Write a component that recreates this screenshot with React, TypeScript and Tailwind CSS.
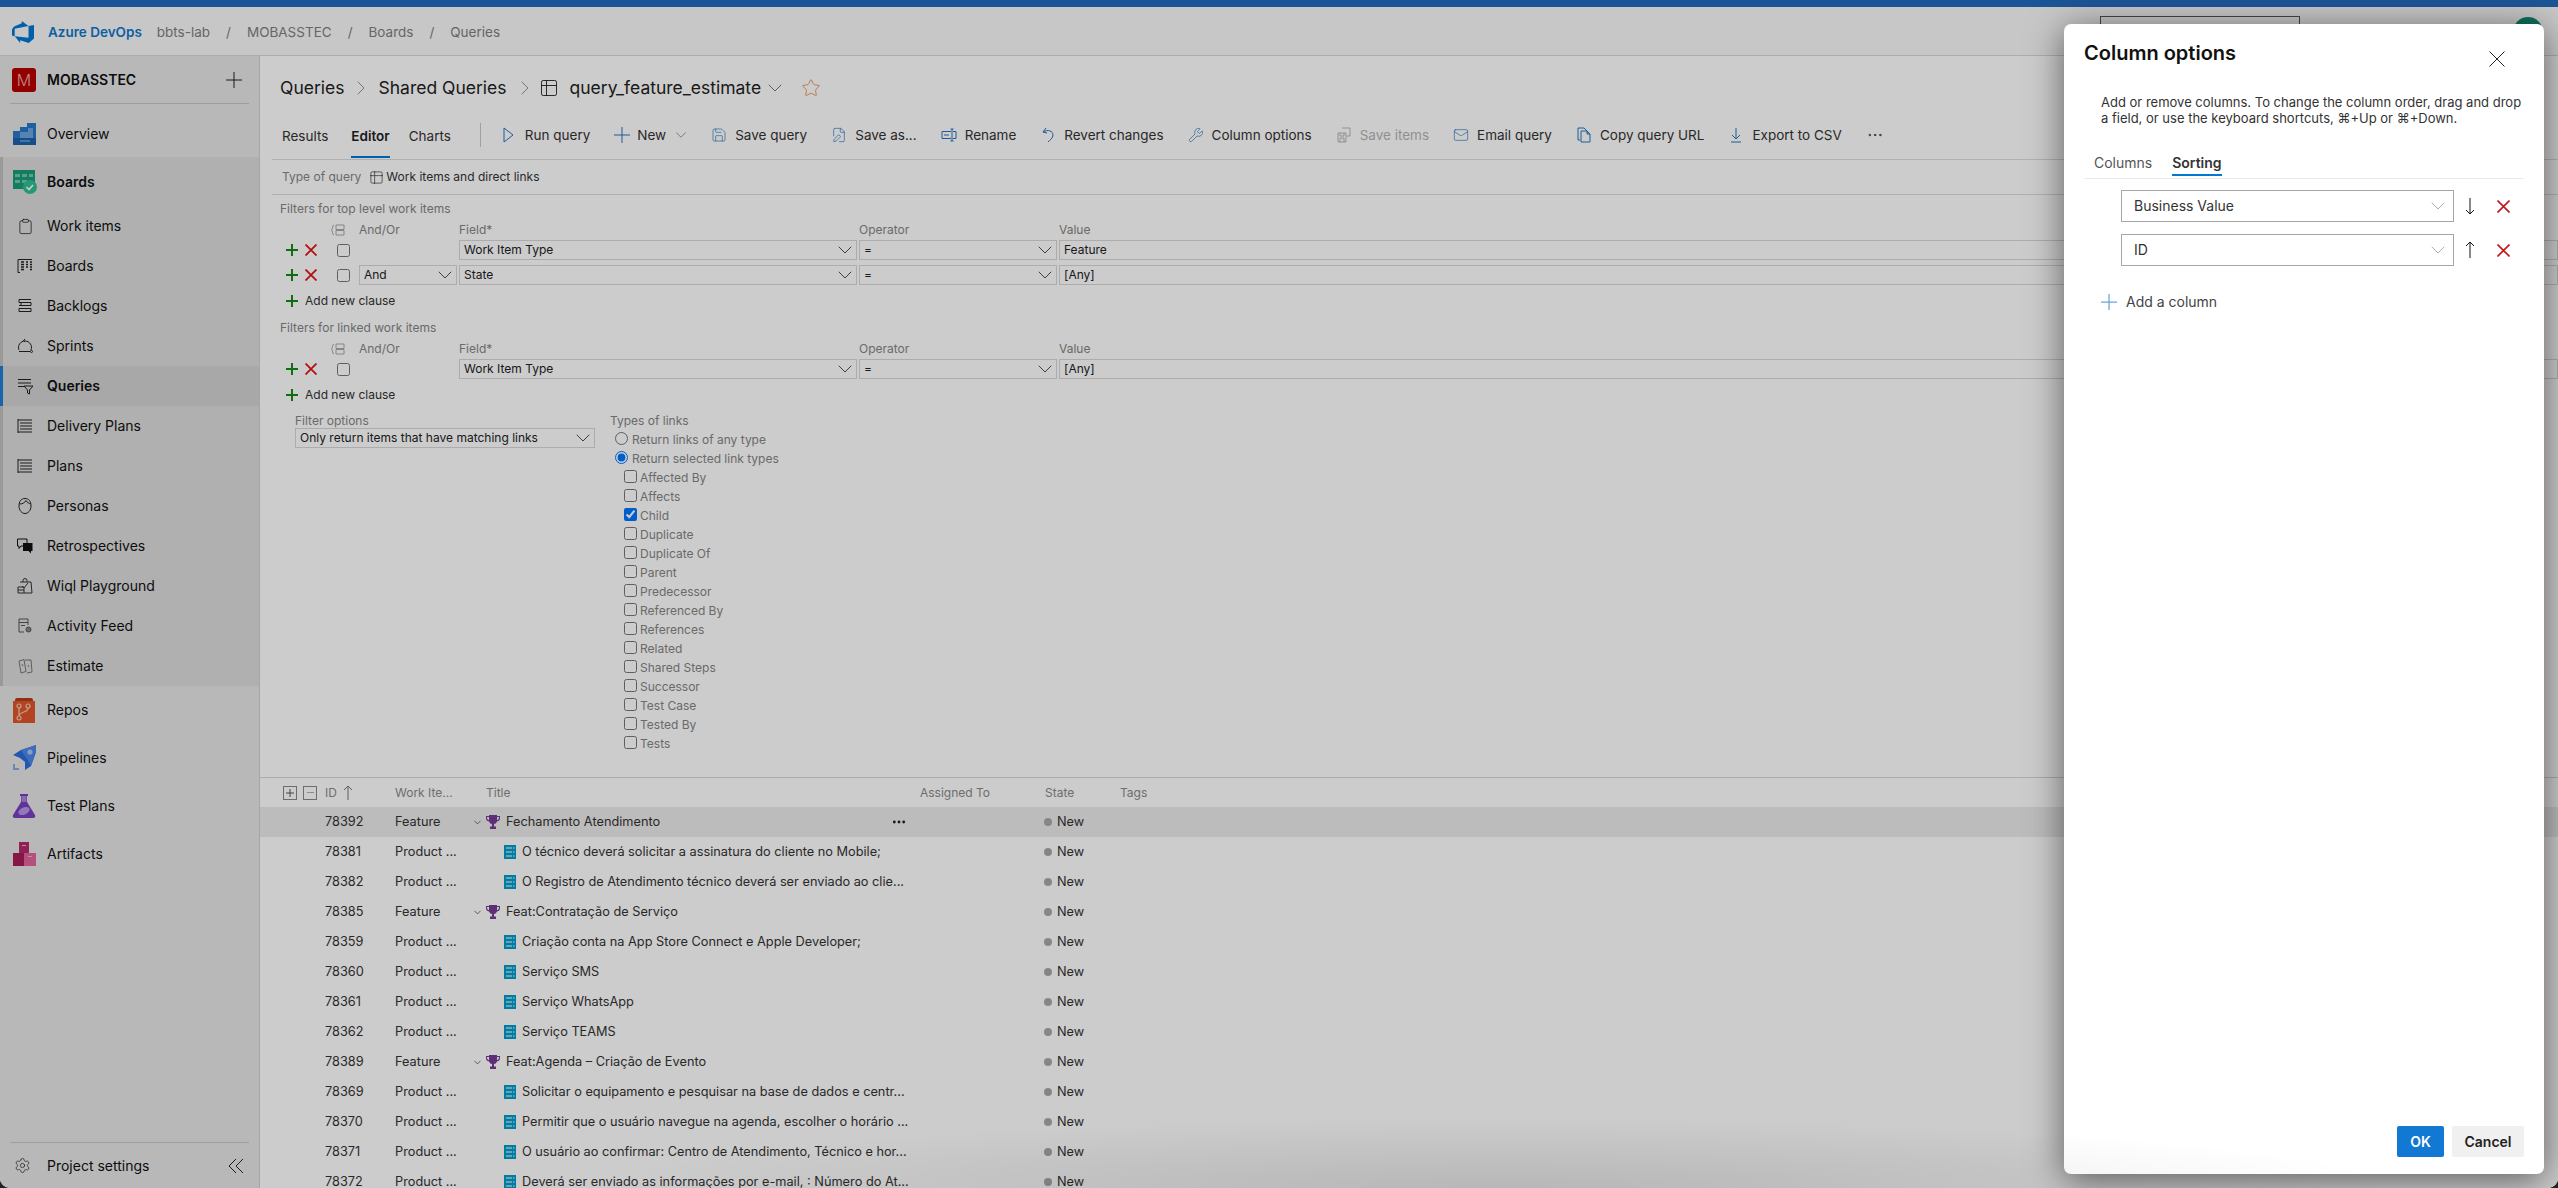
import React from "react";
import {
  ChevronDown, ChevronRight, Save, FilePen, Wrench, Mail, Settings, Star, Table2, Ellipsis, Clipboard, Minus,
} from "lucide-react";

const S = ({ children, c = "#222", w = 18 }: { children: React.ReactNode; c?: string; w?: number }) => (
  <svg width={w} height={w} viewBox="0 0 18 18" fill="none" stroke={c} strokeWidth="1">{children}</svg>
);

const Cross = ({ s = 16, c = "#222", w = 1 }: { s?: number; c?: string; w?: number }) => (
  <svg width={s} height={s} viewBox={`0 0 ${s} ${s}`} fill="none" stroke={c} strokeWidth={w} className="shrink-0">
    <path d={`M${s / 2} 0V${s}M0 ${s / 2}H${s}`} />
  </svg>
);
const Times = ({ s = 13, c = "#c4161c", w = 1.6 }: { s?: number; c?: string; w?: number }) => (
  <svg width={s} height={s} viewBox={`0 0 ${s} ${s}`} fill="none" stroke={c} strokeWidth={w} className="shrink-0">
    <path d={`M.5 .5L${s - 0.5} ${s - 0.5}M${s - 0.5} .5L.5 ${s - 0.5}`} />
  </svg>
);
const Arrow = ({ up, h = 16, c = "#111" }: { up?: boolean; h?: number; c?: string }) => (
  <svg width="10" height={h} viewBox={`0 0 10 ${h}`} fill="none" stroke={c} strokeWidth="1" className="shrink-0">
    {up ? <path d={`M5 0V${h}M1 4L5 0L9 4`} /> : <path d={`M5 0V${h}M1 ${h - 4}L5 ${h}L9 ${h - 4}`} />}
  </svg>
);

const AzureLogo = () => (
  <svg width="22" height="22" viewBox="0 0 24 24" fill="#0078d4">
    <path d="M0 8.877L2.247 5.91l8.405-3.416V.022l7.37 5.393L2.966 8.338v8.225L0 15.707zm24-4.45v14.651l-5.753 4.9-9.303-3.057v3.056l-5.978-7.416 15.057 1.798V5.415z" />
  </svg>
);

const IconOverview = () => (
  <svg width="24" height="24" viewBox="0 0 24 24">
    <path d="M1 9 L8 9 L8 5 L15 5 L15 1 L24 1 L24 23 L2 23 Q1 23 1 22 Z" fill="#2a78c8" />
    <path d="M8 10h8v-4h5v11H8z" fill="#6aa6e0" />
    <path d="M1 16h23v7H2q-1 0-1-1z" fill="#1d62ad" />
    <path d="M8 18h10v2H8z" fill="#4f94d8" />
  </svg>
);
const IconBoards = () => (
  <svg width="26" height="26" viewBox="0 0 26 26">
    <path d="M1 1h22v19H1z" fill="#1a9c7a" />
    <path d="M3 5h5v3H3zM10 5h5v3h-5zM17 5h4v3h-4zM3 11h5v3H3zM10 11h5v3h-5z" fill="#6ccbad" />
    <circle cx="18" cy="18" r="7" fill="#2fbf94" />
    <path d="M14.5 18l2.5 2.5 4-4.5" stroke="#fff" strokeWidth="1.6" fill="none" />
  </svg>
);
const IconRepos = () => (
  <svg width="24" height="26" viewBox="0 0 24 26">
    <path d="M3 3q0-2 2-2h14q2 0 2 2v2H3z" fill="#b33d18" />
    <path d="M1 4h22v22H1z" fill="#e0562b" />
    <g fill="none" stroke="#f8c7b4" strokeWidth="1.2">
      <circle cx="7" cy="9" r="2" /><circle cx="16" cy="9" r="2" /><circle cx="7" cy="21" r="2" />
      <path d="M7 11v8M16 11c0 5-8 3-9 8" />
    </g>
  </svg>
);
const IconPipelines = () => (
  <svg width="24" height="26" viewBox="0 0 24 26">
    <path d="M1 10 L9 5 L24 0 V7 L19 21 L13 25 L13 17 L8 13 Z" fill="#2a6de0" />
    <path d="M9 5 L24 0 V7 L19 21 L15 14Z" fill="#4f86ea" />
    <circle cx="18" cy="7" r="2.6" fill="#a8c6f5" />
    <path d="M1 25v-6h2v4h4v2z" fill="#8aa8e0" />
  </svg>
);
const IconTest = () => (
  <svg width="24" height="26" viewBox="0 0 24 26">
    <path d="M8 1h8v2h-1v6l8 13q1 3-2 3H3q-3 0-2-3l8-13V3H8z" fill="#7b3fc4" />
    <path d="M9.5 3h5v6h-5z" fill="#a885d8" />
    <ellipse cx="12" cy="18" rx="6" ry="3.5" fill="#b79ae3" transform="rotate(-25 12 18)" />
  </svg>
);
const IconArtifacts = () => (
  <svg width="24" height="26" viewBox="0 0 24 26">
    <path d="M7 1h10v11H7z" fill="#b52a68" />
    <path d="M1 12h11v13H1z" fill="#a81c58" />
    <path d="M12 12h12v13H12z" fill="#e0669b" />
    <path d="M10 4h4v1h-4zM16 15h4v1h-4z" fill="#f2b2cd" />
  </svg>
);

const subIcons: Record<string, React.ReactNode> = {
  "Work items": <Clipboard size={17} strokeWidth={1} color="#111" />,
  Boards: (
    <S><path d="M2 2.5h14M2 2.5v13M2 15.5h2" /><path d="M5 5h3M10 5h2M14 5h2M5 7.5h3M10 7.5h2M14 7.5h2M5 10h3M10 10h2M14 10h2M5 12.5h3M14 12.5h2" strokeWidth="1.5" /></S>
  ),
  Backlogs: <S><path d="M3 2.5h12M5 5.5h10v3H5zM3 11.5h12v3H3zM3 2.5v3h2M3 8.5h12" /></S>,
  Sprints: <S><path d="M3 13a6.5 6.5 0 1 1 12 0M9 2l-1.5 1.5L9 5" /><path d="M3 14.5h11" /><circle cx="15.5" cy="14.5" r="1" /></S>,
  Queries: <S><path d="M2 2.5h13M2 6h13M2 9.5h6M8 9h9l-3.5 4v4l-2-1v-3z" /></S>,
  "Delivery Plans": <S><path d="M2 2v14M2 3h14M4 6h12M4 9h12M4 12h12M2 15h14" /></S>,
  Plans: <S><path d="M2 2v14M2 3h14M4 6h12M4 9h12M4 12h12M2 15h14" /></S>,
  Personas: <S><path d="M9 1.5c4 0 6 3 6 7.500s-3 7.500-6 7.500-6-3-6-7.500 2-7.500 6-7.500zM3.500 7c3 0 5-1 6.500-3.500 1 2 3 3 4.500 3.500" /></S>,
  Retrospectives: (
    <svg width="18" height="18" viewBox="0 0 18 18">
      <path d="M1.500 2h9.500v7H5l-2 2.500V9H1.500z" fill="none" stroke="#111" />
      <path d="M7 6h9.500v8H15v2.500L12.500 14H7z" fill="#111" />
    </svg>
  ),
  "Wiql Playground": <S c="#333"><path d="M7 5V3.500a2 2 0 0 1 4 0V5M4 5h11l1 11H8M6 9l2 2 4-5" /><path d="M2 10h6v6H2zM2 13h6" /></S>,
  "Activity Feed": <S c="#555"><path d="M12 8V2H3v13h5M3 5.500h9M5 8.500h4" /><circle cx="12.500" cy="12.500" r="2.500" fill="#888" /></S>,
  Estimate: <S c="#777"><path d="M3 4l5-1.500 2 12-5 1.500zM9 3h6l1 12-5 1" /><path d="M6 7l1 2M12 8l1 2" /></S>,
};

function SubItem({ label, active }: { label: string; active?: boolean }) {
  return (
    <div className={`flex h-10 items-center border-l-[3px] ${active ? "border-[#1f7fd6] bg-[#d2d2d2] font-semibold" : "border-[#c0c0c0]"}`}>
      <span className="flex w-[44px] justify-center">{subIcons[label]}</span>
      <span className="text-sm text-[#111]">{label}</span>
    </div>
  );
}

function Primary({ icon, label, bold }: { icon: React.ReactNode; label: string; bold?: boolean }) {
  return (
    <div className="flex h-12 items-center">
      <span className="flex w-[47px] justify-center">{icon}</span>
      <span className={`text-sm text-[#111] ${bold ? "font-semibold" : ""}`}>{label}</span>
    </div>
  );
}

function Sidebar() {
  return (
    <aside className="flex h-full w-[260px] shrink-0 flex-col border-r border-[#d0d0d0] bg-[#e7e7e7]">
      <div className="mx-[10px] flex h-12 items-center border-b border-[#c6c6c6]">
        <span className="ml-[2px] flex h-6 w-6 items-center justify-center rounded-[3px] bg-[#b80000] text-base font-light text-[#f0b0b0]">M</span>
        <span className="ml-[11px] text-sm font-semibold text-[#111]">MOBASSTEC</span>
        <span className="ml-auto mr-[7px]"><Cross /></span>
      </div>
      <div className="mt-[6px] h-[47px]"><Primary icon={<IconOverview />} label="Overview" /></div>
      <div className="bg-[#dcdcdc]">
        <div className="flex h-[49px] items-center border-l-[3px] border-[#c0c0c0]">
          <span className="flex w-[44px] justify-center"><IconBoards /></span>
          <span className="text-sm font-semibold text-[#111]">Boards</span>
        </div>
        <SubItem label="Work items" />
        <SubItem label="Boards" />
        <SubItem label="Backlogs" />
        <SubItem label="Sprints" />
        <SubItem label="Queries" active />
        <SubItem label="Delivery Plans" />
        <SubItem label="Plans" />
        <SubItem label="Personas" />
        <SubItem label="Retrospectives" />
        <SubItem label="Wiql Playground" />
        <SubItem label="Activity Feed" />
        <SubItem label="Estimate" />
      </div>
      <Primary icon={<IconRepos />} label="Repos" />
      <Primary icon={<IconPipelines />} label="Pipelines" />
      <Primary icon={<IconTest />} label="Test Plans" />
      <Primary icon={<IconArtifacts />} label="Artifacts" />
      <div className="mx-[10px] mt-auto flex h-[46px] items-center border-t border-[#c6c6c6]">
        <span className="ml-[4px] w-[33px]"><Settings size={17} strokeWidth={1} className="text-[#222]" /></span>
        <span className="text-sm text-[#111]">Project settings</span>
        <svg width="16" height="16" viewBox="0 0 16 16" fill="none" stroke="#222" className="ml-auto mr-[5px]"><path d="M8 1L1 8l7 7M15 1L8 8l7 7" /></svg>
      </div>
    </aside>
  );
}

const B = "#2673bd";
function Tool({ icon, label, off }: { icon: React.ReactNode; label: string; off?: boolean }) {
  return (
    <div className={`flex items-center gap-[8px] text-[13.5px] ${off ? "text-[#b5b5b5]" : "text-[#333]"}`}>
      <span className="flex w-4 justify-center">{icon}</span>
      <span>{label}</span>
    </div>
  );
}

const Line = ({ d, c = B }: { d: string; c?: string }) => (
  <svg width="16" height="16" viewBox="0 0 16 16" fill="none" stroke={c} strokeWidth="1" className="shrink-0"><path d={d} /></svg>
);

function Toolbar() {
  const p = { size: 18, strokeWidth: 1, color: B };
  return (
    <div className="ml-3 flex h-10 shrink-0 items-start border-b border-[#dcdcdc] text-[13.5px]">
      <div className="ml-[10px] flex h-[38px] items-center border-b-2 border-transparent pb-1 text-[#333]">Results</div>
      <div className="ml-[23px] flex h-[38px] items-center border-b-2 border-[#0078d4] pb-1 font-semibold text-[#222]">Editor</div>
      <div className="ml-[19px] flex h-[38px] items-center border-b-2 border-transparent pb-1 text-[#333]">Charts</div>
      <div className="ml-[29px] mt-[3px] h-6 w-px bg-[#c8c8c8]" />
      <div className="ml-[20px] flex h-[30px] items-center gap-[24px]">
        <Tool icon={<Line d="M3 1L12 8L3 15Z" />} label="Run query" />
        <div className="flex items-center gap-[7px] text-[#333]">
          <Cross c={B} />
          <span>New</span>
          <ChevronDown size={18} strokeWidth={0.9} color="#666" className="ml-[-1px] mr-[-3px]" />
        </div>
        <Tool icon={<Save {...p} />} label="Save query" />
        <Tool icon={<FilePen {...p} />} label="Save as..." />
        <Tool icon={<Line d="M10 4.500H1v7h9M12 4.500h3v7h-3M11 2v12M9.500 2h3M9.500 14h3M3 8h5" />} label="Rename" />
        <Tool icon={<Line d="M6 1L3 5l4 1M3 5c5-3 10-1 10 3 0 3-3 5-5 7" />} label="Revert changes" />
        <Tool icon={<Wrench {...p} />} label="Column options" />
        <Tool icon={<Line c="#b5b5b5" d="M6 1h8v8h-3M2 6h8v9H2zM4 6v3h4V6M4 15v-4h4v4" />} label="Save items" off />
        <Tool icon={<Mail {...p} />} label="Email query" />
        <Tool icon={<Line d="M2 1h6l4 4v1M2 1v12h2M5 4h6l3 3v8H5zM11 4v3h3" />} label="Copy query URL" />
        <Tool icon={<Line d="M8 1v11M4 8l4 4 4-4M3 15h10" />} label="Export to CSV" />
        <Ellipsis size={18} strokeWidth={1.25} className="text-[#333]" />
      </div>
    </div>
  );
}

const Box = ({ text, chevron }: { text: string; chevron?: boolean }) => (
  <div className="flex h-5 items-center justify-between border border-[#d8d8d8] pl-[4px] text-xs text-[#222]">
    <span>{text}</span>
    {chevron && <ChevronDown size={24} strokeWidth={0.8} className="mr-[-1px] shrink-0 text-[#222]" />}
  </div>
);

const rowGrid = "grid grid-cols-[44px_26px_98px_398px_198px_1fr] gap-x-[2px] pl-[25px]";

function PlusX() {
  return (
    <div className="flex items-center gap-[7px] pl-[1px]">
      <Cross s={12} c="#148a14" w={2} />
      <Times s={12} c="#e01414" w={1.8} />
    </div>
  );
}

function Row({ and, field, value }: { and?: boolean; field: string; value: string }) {
  return (
    <div className={rowGrid}>
      <PlusX />
      <div className="flex items-center pl-[6px]"><input type="checkbox" readOnly className="m-0 h-[13px] w-[13px]" /></div>
      {and ? <Box text="And" chevron /> : <div />}
      <Box text={field} chevron />
      <Box text="=" chevron />
      <Box text={value} />
    </div>
  );
}

function Head({ h }: { h: string }) {
  return (
    <div className={`${rowGrid} ${h} mb-[2px] items-center text-xs text-[#858585]`}>
      <div />
      <svg width="14" height="12" viewBox="0 0 14 12" fill="none" stroke="#a8a8a8"><path d="M3 1C1 1 2 5 .5 6 2 7 1 11 3 11M5 1h8v4.500H5zM5 6.500h8V11H5z" /></svg>
      <div>And/Or</div>
      <div>Field*</div>
      <div>Operator</div>
      <div>Value</div>
    </div>
  );
}

const AddClause = () => (
  <div className="mt-1 flex h-6 items-center pl-[26px] text-xs text-[#333]">
    <Cross s={12} c="#148a14" w={2} />
    <span className="ml-[7px]">Add new clause</span>
  </div>
);

const links = ["Affected By", "Affects", "Child", "Duplicate", "Duplicate Of", "Parent", "Predecessor", "Referenced By", "References", "Related", "Shared Steps", "Successor", "Test Case", "Tested By", "Tests"];

function Editor() {
  return (
    <div className="h-[617px] shrink-0 overflow-hidden">
      <div className="ml-3 flex h-[35px] items-center border-b border-[#dcdcdc] pl-[10px] text-xs">
        <span className="text-[#858585]">Type of query</span>
        <Table2 size={15} strokeWidth={1} className="ml-[8px] text-[#222]" />
        <span className="ml-[2px] text-[#333]">Work items and direct links</span>
      </div>
      <div className="flex h-[27px] items-center pl-5 pt-[1px] text-xs text-[#858585]">Filters for top level work items</div>
      <Head h="h-4" />
      <div className="flex flex-col gap-[5px]">
        <Row field="Work Item Type" value="Feature" />
        <Row and field="State" value="[Any]" />
      </div>
      <AddClause />
      <div className="flex h-[28px] items-center pl-5 pt-[1px] text-xs text-[#858585]">Filters for linked work items</div>
      <Head h="h-4" />
      <Row field="Work Item Type" value="[Any]" />
      <AddClause />
      <div className="mt-[7px] flex pl-[35px] text-xs">
        <div className="w-[300px]">
          <div className="flex h-[14px] items-center text-[#858585]">Filter options</div>
          <Box text="Only return items that have matching links" chevron />
        </div>
        <div className="ml-[15px] text-[#858585]">
          <div className="flex h-[14px] items-center">Types of links</div>
          <div className="ml-[5px] mt-[1px] flex h-[19px] items-center gap-[4px]"><input type="radio" name="l" readOnly className="m-0 h-[13px] w-[13px]" /><span className="pt-[3px]">Return links of any type</span></div>
          <div className="ml-[5px] flex h-[19px] items-center gap-[4px]"><input type="radio" name="l" defaultChecked className="m-0 h-[13px] w-[13px]" /><span className="pt-[3px]">Return selected link types</span></div>
          {links.map((l) => (
            <div key={l} className="ml-[14px] flex h-[19px] items-center gap-[3px]">
              <input type="checkbox" readOnly checked={l === "Child"} className="m-0 h-[13px] w-[13px]" />
              <span className="pt-[3px]">{l}</span>
            </div>
          ))}
        </div>
      </div>
    </div>
  );
}

type R = { id: string; t: "f" | "p"; title: string };
const rows: R[] = [
  { id: "78392", t: "f", title: "Fechamento Atendimento" },
  { id: "78381", t: "p", title: "O técnico deverá solicitar a assinatura do cliente no Mobile;" },
  { id: "78382", t: "p", title: "O Registro de Atendimento técnico deverá ser enviado ao clie..." },
  { id: "78385", t: "f", title: "Feat:Contratação de Serviço" },
  { id: "78359", t: "p", title: "Criação conta na App Store Connect e Apple Developer;" },
  { id: "78360", t: "p", title: "Serviço SMS" },
  { id: "78361", t: "p", title: "Serviço WhatsApp" },
  { id: "78362", t: "p", title: "Serviço TEAMS" },
  { id: "78389", t: "f", title: "Feat:Agenda – Criação de Evento" },
  { id: "78369", t: "p", title: "Solicitar o equipamento e pesquisar na base de dados e centr..." },
  { id: "78370", t: "p", title: "Permitir que o usuário navegue na agenda, escolher o horário ..." },
  { id: "78371", t: "p", title: "O usuário ao confirmar: Centro de Atendimento, Técnico e hor..." },
  { id: "78372", t: "p", title: "Deverá ser enviado as informações por e-mail, : Número do At..." },
];

const Trophy = () => (
  <svg width="14" height="14" viewBox="0 0 14 14" className="shrink-0"><path d="M3 0h8v1h3v2q0 3-3 3.500Q10 9 8 9v2.500h2V14H4v-2.500h2V9Q4 9 3 6.500 0 6 0 3V1h3zM1 2v1q0 1.500 2 2.200V2zm12 0h-2v3.200Q13 4.500 13 3z" fill="#773b93" /></svg>
);
const Story = () => (
  <svg width="12" height="14" viewBox="0 0 12 14" className="shrink-0"><rect width="12" height="14" fill="#009ccc" /><path d="M2 3h6M2 7h6M2 11h6M9 3h1.500M9 7h1.500M9 11h1.500" stroke="#fff" strokeWidth="1" /></svg>
);

const tableGrid = "grid grid-cols-[65px_70px_75px_450px_125px_75px_1fr] items-center";

function Results() {
  return (
    <div className="flex-1 overflow-hidden border-t border-[#d6d6d6]">
      <div className={`${tableGrid} h-[29px] text-xs text-[#8a8a8a]`}>
        <div className="flex items-center gap-[6px] pl-[23px]">
          <span className="flex h-[14px] w-[14px] items-center justify-center border border-[#888]"><Cross s={8} c="#555" /></span>
          <span className="flex h-[14px] w-[14px] items-center justify-center border border-[#888]"><Minus size={11} strokeWidth={1} color="#555" /></span>
        </div>
        <div className="flex items-center gap-[6px]"><span>ID</span><Arrow up h={14} c="#777" /></div>
        <div>Work Ite...</div>
        <div className="pl-[16px]">Title</div>
        <div>Assigned To</div>
        <div>State</div>
        <div>Tags</div>
      </div>
      {rows.map((r, i) => (
        <div key={r.id} className={`${tableGrid} h-[30px] text-[12.75px] text-[#333] ${i === 0 ? "bg-[#ebebeb]" : ""}`}>
          <div />
          <div>{r.id}</div>
          <div>{r.t === "f" ? "Feature" : "Product ..."}</div>
          {r.t === "f" ? (
            <div className="relative flex items-center pl-[2px]">
              <ChevronDown size={11} strokeWidth={1.5} className="mr-[3px] shrink-0" />
              <Trophy />
              <span className="ml-[6px]">{r.title}</span>
              {i === 0 && <Ellipsis size={16} strokeWidth={2.25} className="absolute left-[421px] text-[#222]" />}
            </div>
          ) : (
            <div className="flex items-center pl-[34px]">
              <Story />
              <span className="ml-[6px] whitespace-nowrap">{r.title}</span>
            </div>
          )}
          <div />
          <div className="flex items-center gap-[5px]"><span className="ml-[-1px] h-2 w-2 rounded-full bg-[#a8a8a8]" /><span>New</span></div>
          <div />
        </div>
      ))}
    </div>
  );
}

function Main() {
  return (
    <main className="flex h-full min-w-0 flex-1 flex-col bg-white">
      <div className="flex h-16 shrink-0 items-center pl-5 text-[17.5px] text-[#222]">
        <span>Queries</span>
        <ChevronRight size={24} strokeWidth={0.8} className="mx-[5px] text-[#777]" />
        <span>Shared Queries</span>
        <ChevronRight size={24} strokeWidth={0.8} className="ml-[6px] mr-[2px] text-[#777]" />
        <Table2 size={20} strokeWidth={1.1} className="text-[#222]" />
        <span className="ml-[11px]">query_feature_estimate</span>
        <ChevronDown size={24} strokeWidth={0.8} className="ml-[2px] text-[#555]" />
        <Star size={20} strokeWidth={1} color="#e2884a" className="ml-[14px]" />
      </div>
      <Toolbar />
      <Editor />
      <Results />
    </main>
  );
}

function Panel() {
  return (
    <div className="absolute left-[2064px] top-6 z-20 flex h-[1150px] w-[480px] flex-col rounded-[7px] bg-white shadow-[0_6px_36px_rgba(0,0,0,0.55)]">
      <div className="flex h-[62px] items-start pl-5 pr-[39px]">
        <h1 className="mt-[15px] text-[20px] font-semibold leading-7 text-[#111]">Column options</h1>
        <span className="ml-auto mt-[27px]"><Times s={16} c="#222" w={1} /></span>
      </div>
      <p className="ml-[37px] mr-[18px] mt-[8px] text-[13px] leading-4 text-[#333]">
        Add or remove columns. To change the column order, drag and drop a field, or use the keyboard shortcuts, ⌘+Up or ⌘+Down.
      </p>
      <div className="mx-5 mt-[27px] flex h-[24px] text-sm">
        <span className="ml-[10px] text-[#555]">Columns</span>
        <span className="ml-[20px] h-[23px] border-b-2 border-[#0078d4] font-semibold text-[#333]">Sorting</span>
      </div>
      <div className="mx-5 h-[2px] border-b border-[#eaeaea]" />
      <div className="ml-[57px] mt-[11px] flex flex-col gap-[12px]">
        {[{ t: "Business Value", d: true }, { t: "ID", d: false }].map((r) => (
          <div key={r.t} className="flex items-center">
            <div className="flex h-8 w-[333px] items-center justify-between border border-[#a6a6a6] pl-[12px] pr-[3px] text-sm text-[#333]">
              <span>{r.t}</span>
              <ChevronDown size={24} strokeWidth={0.8} className="text-[#999]" />
            </div>
            <span className="ml-[11px] flex w-[10px]"><Arrow up={!r.d} /></span>
            <span className="ml-[22px] flex"><Times /></span>
          </div>
        ))}
      </div>
      <div className="ml-[37px] mt-[26px] flex items-center text-sm text-[#444]">
        <Cross c="#6aa5d8" w={1.25} />
        <span className="ml-[9px]">Add a column</span>
      </div>
      <div className="mb-[17px] mr-5 mt-auto flex justify-end gap-2">
        <button className="h-[31px] w-[47px] rounded-[2px] bg-[#1178d3] text-sm font-semibold text-white">OK</button>
        <button className="h-[31px] w-[72px] rounded-[2px] bg-[#f0f0f0] text-sm font-semibold text-[#222]">Cancel</button>
      </div>
    </div>
  );
}

export default function App() {
  return (
    <div className="h-[1188px] w-full overflow-hidden bg-[#222] font-[Inter,'Noto_Sans',sans-serif]">
      <div className="relative flex h-full w-full flex-col overflow-hidden rounded-b-[10px] bg-white">
        <div className="h-[7px] shrink-0 bg-[#236bbd]" />
        <header className="flex h-[49px] shrink-0 items-center border-b border-[#d8d8d8] bg-[#f9f9f9] pl-[12px] pr-[15px] pt-[2px] text-[13.5px] text-[#808080]">
          <AzureLogo />
          <span className="ml-[14px] font-semibold text-[#0c78cc]">Azure DevOps</span>
          <span className="ml-[15px]">bbts-lab</span>
          <span className="mx-[16px]">/</span>
          <span>MOBASSTEC</span>
          <span className="mx-[16px]">/</span>
          <span>Boards</span>
          <span className="mx-[16px]">/</span>
          <span>Queries</span>
          <div className="ml-auto h-8 w-[200px] border border-[#555]" />
          <div className="ml-[213px] h-[30px] w-[30px] rounded-full bg-[#128a72]" />
        </header>
        <div className="flex min-h-0 flex-1">
          <Sidebar />
          <Main />
        </div>
        <div className="pointer-events-none absolute inset-0 z-10 bg-black/20" />
        <Panel />
        <div className="pointer-events-none absolute inset-x-0 bottom-0 z-30 h-[90px] bg-[radial-gradient(ellipse_900px_70px_at_1500px_100%,rgba(0,0,0,0.1),transparent)]" />
      </div>
    </div>
  );
}
